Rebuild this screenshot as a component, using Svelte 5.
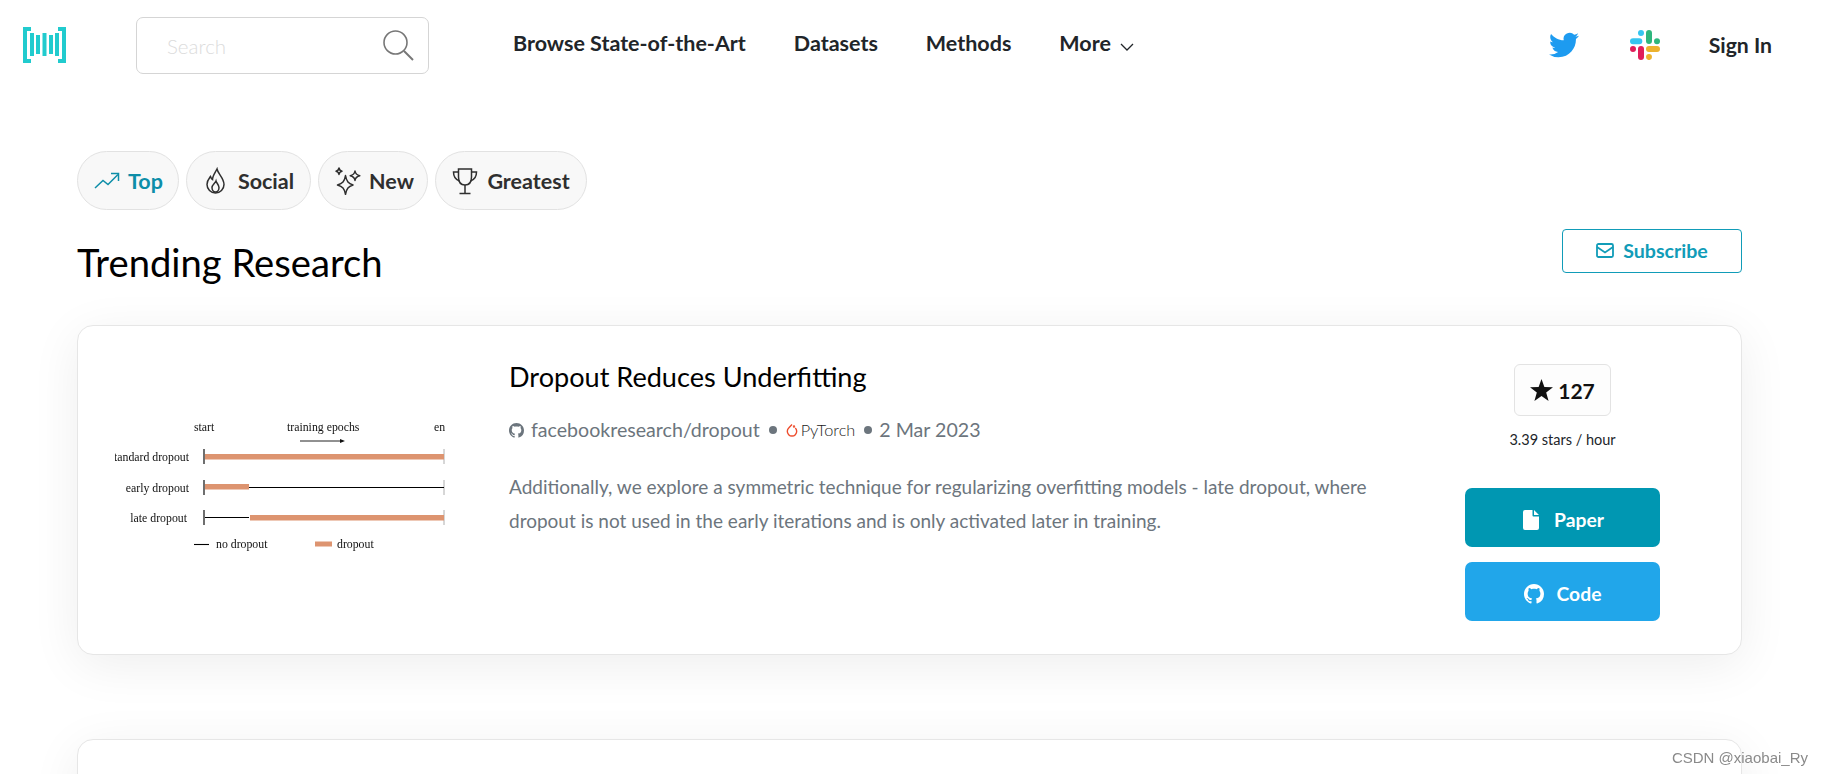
<script>
	const chips = [
		{ label: 'Top', icon: 'top', active: true },
		{ label: 'Social', icon: 'social' },
		{ label: 'New', icon: 'new' },
		{ label: 'Greatest', icon: 'greatest' }
	];
	const github =
		'M8 0C3.58 0 0 3.58 0 8c0 3.54 2.29 6.53 5.47 7.59.4.07.55-.17.55-.38 0-.19-.01-.82-.01-1.49-2.01.37-2.53-.49-2.69-.94-.09-.23-.48-.94-.82-1.13-.28-.15-.68-.52-.01-.53.63-.01 1.08.58 1.23.82.72 1.21 1.87.87 2.33.66.07-.52.28-.87.51-1.07-1.78-.2-3.64-.89-3.64-3.95 0-.87.31-1.59.82-2.15-.08-.2-.36-1.02.08-2.12 0 0 .67-.21 2.2.82.64-.18 1.32-.27 2-.27.68 0 1.36.09 2 .27 1.53-1.04 2.2-.82 2.2-.82.44 1.1.16 1.92.08 2.12.51.56.82 1.27.82 2.15 0 3.07-1.87 3.75-3.65 3.95.29.25.54.73.54 1.48 0 1.07-.01 1.93-.01 2.2 0 .21.15.46.55.38A8.013 8.013 0 0016 8c0-4.42-3.58-8-8-8z';
</script>

<header>
	<svg class="logo" viewBox="0 0 43 36" fill="#21cbce">
		<path d="M0 0h8v4H4v28h4v4H0zM43 0h-8v4h4v28h-4v4h8z" />
		<rect x="7" y="6" width="4" height="23" />
		<rect x="13" y="8" width="4" height="19" />
		<rect x="19.500" y="6" width="4" height="23" />
		<rect x="26" y="8" width="4" height="19" />
		<rect x="32" y="6" width="4" height="23" />
	</svg>

	<div class="search">
		<span>Search</span>
		<svg viewBox="0 0 32 32" fill="none" stroke="#777" stroke-width="1.600">
			<circle cx="13.500" cy="13.500" r="11.500" />
			<path d="M22 22l9 9" stroke-width="2" />
		</svg>
	</div>

	<nav>
		<a href="#a">Browse State-of-the-Art</a>
		<a href="#a">Datasets</a>
		<a href="#a">Methods</a>
		<a href="#a" class="more">
			More
			<svg viewBox="0 0 14 8" fill="none" stroke="#212529" stroke-width="1.300"><path d="M1 1l6 6 6-6" /></svg>
		</a>
	</nav>

	<div class="right">
		<svg class="twitter" viewBox="0 0 24 24" fill="#1d9bf0">
			<path d="M23.953 4.57a10 10 0 01-2.825.775 4.958 4.958 0 002.163-2.723c-.951.555-2.005.959-3.127 1.184a4.92 4.92 0 00-8.384 4.482C7.69 8.095 4.067 6.13 1.64 3.162a4.822 4.822 0 00-.666 2.475c0 1.71.87 3.213 2.188 4.096a4.904 4.904 0 01-2.228-.616v.06a4.923 4.923 0 003.946 4.827 4.996 4.996 0 01-2.212.085 4.936 4.936 0 004.604 3.417 9.867 9.867 0 01-6.102 2.105c-.39 0-.779-.023-1.17-.067a13.995 13.995 0 007.557 2.209c9.053 0 13.998-7.496 13.998-13.985 0-.21 0-.42-.015-.63A9.935 9.935 0 0024 4.59z" />
		</svg>
		<svg class="slack" viewBox="0 0 90 90" fill="none" stroke-width="18" stroke-linecap="round">
			<path d="M9 34h19M33 9v.1" stroke="#36c5f0" />
			<path d="M57 9v24M81 34v.1" stroke="#2eb67d" />
			<path d="M33 57v24M9 57v.1" stroke="#e01e5a" />
			<path d="M57 57h24M57 81v.1" stroke="#ecb22e" />
		</svg>
		<a href="#a">Sign In</a>
	</div>
</header>

<main>
	<div class="chips">
		{#each chips as chip}
			<a href="#a" class="chip {chip.icon}" class:active={chip.active}>
				{#if chip.icon === 'top'}
					<svg viewBox="0 0 26 28" fill="none" stroke="currentColor" stroke-width="1.500">
						<path d="M1 21l8-7.500 5 4 10-10" /><path d="M17 6.500h7.500V14" />
					</svg>
				{:else if chip.icon === 'social'}
					<svg viewBox="0 0 26 28" fill="none" stroke="currentColor" stroke-width="1.500">
						<path d="M14 2c1 5 7 9 7 15.500a8.500 8.500 0 01-17 0c0-4 2-6 3.500-8 .5 1.500 1 2.500 2 3C9.500 9 12 6 14 2z" />
						<path d="M13 14c.5 2 3 4 3 6.500a3.500 4.500 0 01-7 0c0-2.500 3-4 4-6.500z" />
					</svg>
				{:else if chip.icon === 'new'}
					<svg viewBox="0 0 26 28" fill="none" stroke="currentColor" stroke-width="1.500" stroke-linejoin="round">
						<path d="M10.500 8.500c1 6 3 8 7.500 9.500-4.500 1.500-6.500 3.500-7.500 9.500C9.500 21.500 7.500 19.500 2.500 18c5-1.500 7-3.500 8-9.500z" />
						<path d="M4 1c.4 2.200 1 2.800 3 3.200C5 4.600 4.400 5.200 4 7.400 3.600 5.200 3 4.600 1 4.200 3 3.800 3.600 3.200 4 1z" />
						<path d="M20 4c.5 3 1.500 4 4.800 4.700-3.300.7-4.300 1.700-4.800 4.700-.5-3-1.500-4-4.800-4.700C18.500 8 19.500 7 20 4z" />
					</svg>
				{:else}
					<svg viewBox="0 0 26 28" fill="none" stroke="currentColor" stroke-width="1.500">
						<path d="M6.500 2h13v8c0 5-2.500 8-6.500 8s-6.500-3-6.500-8z" />
						<path d="M6.500 5H1.500c0 4.500 1.500 7.500 6 9M19.500 5h5c0 4.500-1.500 7.500-6 9M13 18v8M7.500 26.500h11" />
					</svg>
				{/if}
				<span>{chip.label}</span>
			</a>
		{/each}
	</div>

	<div class="heading">
		<h1>Trending Research</h1>
		<a href="#a" class="subscribe">
			<svg viewBox="0 0 18 15" fill="none" stroke="currentColor" stroke-width="1.800">
				<rect x="1" y="1" width="16" height="13" rx="1.500" /><path d="M1 4l8 5.500L17 4" />
			</svg>
			Subscribe
		</a>
	</div>

	<article class="card">
		<svg class="figure" viewBox="115 400 330 170" font-family="Liberation Serif, serif" font-size="11.800" fill="#111">
			<text x="194" y="431">start</text>
			<text x="287" y="431">training epochs</text>
			<text x="434" y="431">en</text>
			<path d="M300 441h41" stroke="#222" stroke-width="1" />
			<path d="M340 439l5 2-5 2z" />
			<text x="189" y="461" text-anchor="end">tandard dropout</text>
			<text x="189" y="492" text-anchor="end">early dropout</text>
			<text x="187" y="522" text-anchor="end">late dropout</text>
			<path d="M204 449v15M204 480v15M204 510v15" stroke="#222" stroke-width="1.300" />
			<path d="M444 449v15M444 480v15M444 510v15" stroke="#999" stroke-width="0.800" />
			<rect x="205" y="454" width="239" height="5.500" fill="#dd9470" />
			<rect x="205" y="484" width="44" height="5.500" fill="#dd9470" />
			<path d="M249 487.500h195M205 517.500h44" stroke="#000" stroke-width="1.100" />
			<rect x="250" y="515" width="194" height="5.500" fill="#dd9470" />
			<path d="M194 544.500h15" stroke="#000" stroke-width="1.100" />
			<text x="216" y="548">no dropout</text>
			<rect x="315" y="541.500" width="17" height="5" fill="#dd9470" />
			<text x="337" y="548">dropout</text>
		</svg>

		<div class="body">
			<h2>Dropout Reduces Underfitting</h2>
			<div class="meta">
				<svg class="gh" viewBox="0 0 16 16" fill="#6c757d"><path d={github} /></svg>
				<span>facebookresearch/dropout</span>
				<i></i>
				<svg class="torch" viewBox="0 0 12 15" fill="none" stroke="#ee4c2c" stroke-width="1.400">
					<path d="M6 1.500L2.700 5a4.700 4.700 0 106.600 0" /><circle cx="8" cy="3.500" r=".5" />
				</svg>
				<span class="fw">PyTorch</span>
				<i></i>
				<span class="date">2 Mar 2023</span>
			</div>
			<p>
				Additionally, we explore a symmetric technique for regularizing overfitting models - late dropout, where
				dropout is not used in the early iterations and is only activated later in training.
			</p>
		</div>

		<aside>
			<div class="stars">
				<svg viewBox="0 0 24 23" fill="#111"><path d="M12 0l3 8.400 9 .3-7.100 5.500 2.500 8.800L12 17.900 4.600 23l2.500-8.800L0 8.700l9-.3z" /></svg>
				127
			</div>
			<div class="rate">3.39 stars / hour</div>
			<a href="#a" class="btn paper">
				<svg viewBox="0 0 16 20" fill="#fff"><path d="M2 0h7.500v5.500a1 1 0 001 1H16V18a2 2 0 01-2 2H2a2 2 0 01-2-2V2a2 2 0 012-2zM11 0l5 5h-5z" /></svg>
				Paper
			</a>
			<a href="#a" class="btn code">
				<svg viewBox="0 0 16 16" fill="#fff"><path d={github} /></svg>
				Code
			</a>
		</aside>
	</article>

	<article class="card next"></article>
</main>

<div class="mark">CSDN @xiaobai_Ry</div>

<style>
	:global(body) {
		background: #fff;
		overflow: hidden;
		height: 774px;
	}
	a {
		color: inherit;
		text-decoration: none;
	}
	header {
		display: flex;
		align-items: center;
		height: 90px;
		padding: 0 50px 0 23px;
		font-family: Lato, sans-serif;
		color: #212529;
	}
	.logo {
		width: 43px;
		height: 36px;
	}
	.search {
		display: flex;
		align-items: center;
		justify-content: space-between;
		box-sizing: border-box;
		width: 293px;
		height: 57px;
		margin-left: 70px;
		padding: 0 14px 0 30px;
		border: 1px solid #d5d5d5;
		border-radius: 7px;
		color: #dcdcdc;
		font-size: 20.500px;
		font-weight: 300;
	}
	.search span {
		padding-top: 2px;
	}
	.search svg {
		width: 32px;
		height: 32px;
	}
	nav {
		display: flex;
		align-items: center;
		gap: 48px;
		margin-left: 84px;
		font-size: 21.500px;
		font-weight: 700;
		position: relative;
		top: -2px;
	}
	.more svg {
		width: 14px;
		height: 8px;
		margin-left: 4px;
	}
	.right {
		display: flex;
		align-items: center;
		margin-left: auto;
		font-size: 21.200px;
		font-weight: 700;
	}
	.twitter {
		width: 30px;
		height: 30px;
		margin-right: 51px;
	}
	.slack {
		width: 30px;
		height: 30px;
		margin-right: 49px;
	}
	main {
		padding: 61px 80px 0 77px;
		font-family: Lato, sans-serif;
	}
	.chips {
		display: flex;
		gap: 7px;
	}
	.chip {
		display: flex;
		align-items: center;
		gap: 9px;
		box-sizing: border-box;
		height: 59px;
		padding: 0 16px;
		border: 1px solid #e2e2e2;
		border-radius: 30px;
		background: #f8f8f8;
		color: #2f2f2f;
		font-size: 21.500px;
		font-weight: 700;
	}
	.chip.top {
		gap: 8px;
		padding-right: 15px;
	}
	.chip.new {
		gap: 8px;
		padding-right: 13.500px;
	}
	.chip.active {
		color: #0e8ea8;
	}
	.chip svg {
		width: 26px;
		height: 28px;
	}
	.heading {
		display: flex;
		justify-content: space-between;
		align-items: flex-start;
		margin-top: 19px;
		height: 96px;
	}
	h1 {
		margin: 10px 0 0;
		font-size: 38.200px;
		font-weight: 400;
		line-height: 46px;
		color: #000;
	}
	.subscribe {
		display: flex;
		align-items: center;
		justify-content: center;
		gap: 9px;
		box-sizing: border-box;
		width: 180px;
		height: 44px;
		padding-bottom: 2px;
		border: 1px solid #119cb8;
		border-radius: 4px;
		color: #119cb8;
		font-size: 19.600px;
		font-weight: 700;
	}
	.subscribe svg {
		width: 18px;
		height: 15px;
	}
	.card {
		display: flex;
		box-sizing: border-box;
		height: 330px;
		padding: 0 0 0 37px;
		border: 1px solid #e6e6e6;
		border-radius: 16px;
		background: #fff;
		box-shadow: 0 10px 50px rgba(0, 0, 0, 0.07);
	}
	.card.next {
		margin-top: 84px;
	}
	.figure {
		flex: none;
		width: 330px;
		height: 170px;
		margin-top: 74px;
		filter: blur(0.3px);
	}
	.body {
		flex: 1;
		margin-left: 64px;
		padding-top: 32px;
		min-width: 0;
	}
	h2 {
		margin: 0;
		font-size: 27.100px;
		font-weight: 400;
		line-height: 38px;
		color: #000;
	}
	.meta {
		display: flex;
		align-items: center;
		margin-top: 19px;
		color: #6c757d;
		font-size: 19.600px;
		line-height: 30px;
	}
	.meta i {
		width: 8px;
		height: 8px;
		margin: 0 9px;
		border-radius: 50%;
		background: #6c757d;
	}
	.gh {
		width: 15px;
		height: 15px;
		margin-right: 7px;
	}
	.torch {
		width: 12px;
		height: 15px;
		margin: 0 3px 0 0;
	}
	.fw {
		font-size: 16.300px;
		font-weight: 300;
		color: #222;
	}
	.date {
		margin-left: -2px;
	}
	p {
		margin: 25px 0 0;
		color: #6c757d;
		font-size: 19px;
		line-height: 33.500px;
		width: 900px;
	}
	aside {
		flex: none;
		display: flex;
		flex-direction: column;
		align-items: center;
		width: 195px;
		margin-right: 81px;
		padding-top: 38px;
	}
	.stars {
		display: flex;
		align-items: center;
		justify-content: center;
		gap: 5px;
		box-sizing: border-box;
		width: 97px;
		height: 52px;
		border: 1px solid #e3e3e3;
		border-radius: 6px;
		background: #fdfdfd;
		font-size: 21px;
		font-weight: 700;
		color: #111;
	}
	.stars svg {
		width: 23px;
		height: 22px;
	}
	.rate {
		margin-top: 14px;
		font-size: 14.500px;
		line-height: 20px;
		color: #212529;
	}
	.btn {
		display: flex;
		align-items: center;
		justify-content: center;
		gap: 13px;
		box-sizing: border-box;
		width: 195px;
		height: 59px;
		padding-top: 4px;
		border-radius: 7px;
		color: #fff;
		font-size: 19.300px;
		font-weight: 700;
	}
	.btn svg {
		height: 20px;
		width: 20px;
	}
	.paper {
		margin-top: 38px;
		background: #0097b2;
	}
	.code {
		margin-top: 15px;
		background: #21a6ea;
	}
	.mark {
		position: fixed;
		right: 14px;
		bottom: 8px;
		font-family: 'Liberation Sans', sans-serif;
		font-size: 15px;
		color: #8a8a8a;
	}
</style>
